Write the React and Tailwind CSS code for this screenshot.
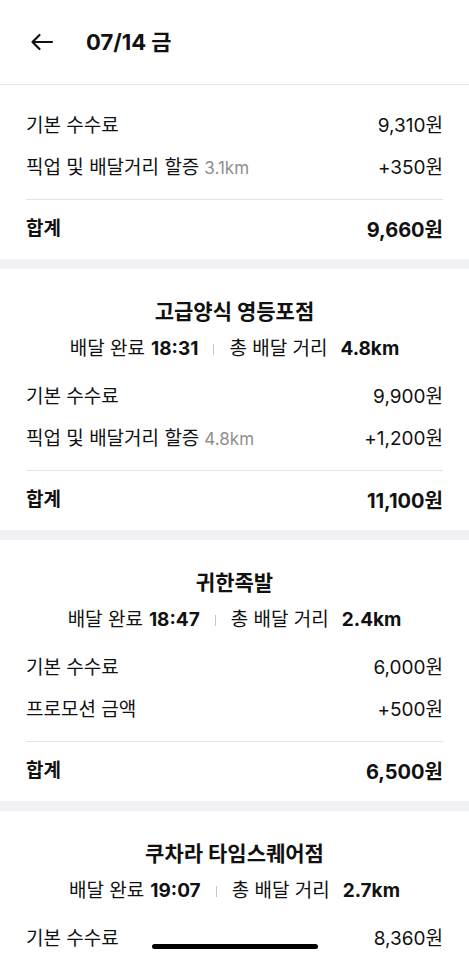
import React from 'react';

const sections = [
  {
    id: 1,
    rows: [
      { label: '기본 수수료', amount: '9,310원' },
      { label: '픽업 및 배달거리 할증', extra: '3.1km', amount: '+350원' },
    ],
    total: '9,660원',
  },
  {
    id: 2,
    store: '고급양식 영등포점',
    time: '18:31',
    distance: '4.8km',
    rows: [
      { label: '기본 수수료', amount: '9,900원' },
      { label: '픽업 및 배달거리 할증', extra: '4.8km', amount: '+1,200원' },
    ],
    total: '11,100원',
  },
  {
    id: 3,
    store: '귀한족발',
    time: '18:47',
    distance: '2.4km',
    rows: [
      { label: '기본 수수료', amount: '6,000원' },
      { label: '프로모션 금액', amount: '+500원' },
    ],
    total: '6,500원',
  },
  {
    // only the top of this card fits on screen
    id: 4,
    store: '쿠차라 타임스퀘어점',
    time: '19:07',
    distance: '2.7km',
    rows: [{ label: '기본 수수료', amount: '8,360원' }],
  },
];

const Section = ({ s }) => (
  <div className="bg-white px-[26px]">
    {s.store ? (
      <div className="pt-[29px] text-center">
        <div className="text-[21px] leading-[28px] font-bold text-[#111]">{s.store}</div>
        <div className="mt-[9px] flex items-center justify-center text-[19px] leading-[28px] text-[#111]">
          <span>배달 완료</span>
          <span className="ml-[6px] font-bold">{s.time}</span>
          <span className="mx-[15px] h-[11px] w-px bg-[#c8c8c8]" />
          <span>총 배달 거리</span>
          <span className="ml-[13px] font-bold">{s.distance}</span>
        </div>
      </div>
    ) : null}
    <div className={s.store ? 'mt-[13px]' : 'pt-[20px]'}>
      {s.rows.map((r) => (
        <div key={r.label} className="flex h-[42px] items-center justify-between text-[19px] text-[#111]">
          <span>
            {r.label}
            {r.extra && <span className="ml-[5px] text-[17px] text-[#8e8e8e]">{r.extra}</span>}
          </span>
          <span>{r.amount}</span>
        </div>
      ))}
    </div>
    {s.total && (
      <>
        <div className="mt-[10px] h-px bg-[#e3e3e3]" />
        <div className="flex h-[59px] items-center justify-between text-[19px] font-bold text-[#111]">
          <span>합계</span>
          <span className="text-[20px]">{s.total}</span>
        </div>
      </>
    )}
  </div>
);

export default function App() {
  return (
    <div
      className="relative h-[961px] overflow-hidden bg-white"
      style={{ fontFamily: 'Inter, "Noto Sans CJK KR", sans-serif' }}
    >
      {/* Header */}
      <div className="flex h-[85px] items-center border-b border-[#e6e6e6] bg-white px-[30px]">
        <svg width="24" height="18" viewBox="0 0 24 18" fill="none" stroke="#111" strokeWidth="2.2" strokeLinecap="round" strokeLinejoin="round">
          <path d="M22 9H2.5M9.5 2L2.5 9l7 7" />
        </svg>
        <h1 className="ml-[32px] text-[22px] font-bold text-[#111]">07/14 금</h1>
      </div>

      {sections.map((s, i) => (
        <React.Fragment key={s.id}>
          {i > 0 && <div className="h-[10px] bg-[#eff1f4]" />}
          <Section s={s} />
        </React.Fragment>
      ))}

      {/* Home indicator */}
      <div className="absolute bottom-[12px] left-1/2 h-[5px] w-[166px] -translate-x-1/2 rounded-full bg-black" />
    </div>
  );
}
